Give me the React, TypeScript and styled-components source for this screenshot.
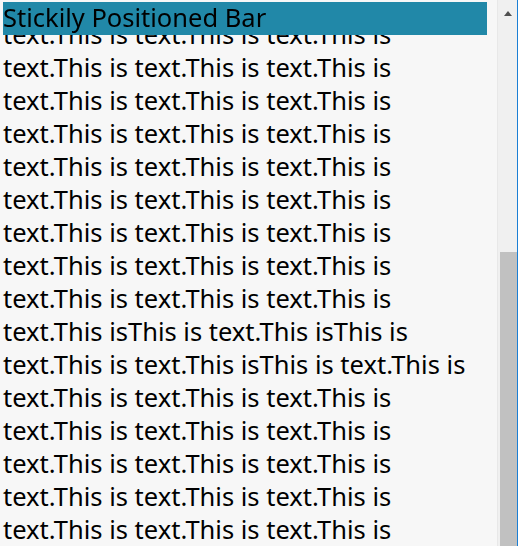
import { useLayoutEffect, useRef } from 'react';
import { styled, createGlobalStyle } from 'styled-components';

const GlobalStyle = createGlobalStyle`
  html, body {
    margin: 0;
    padding: 0;
    overflow: hidden;
    background: #f7f7f7;
  }
`;

const LINE = 'text.This is text.This is text.This is';

// lines already scrolled past, then what is on screen, then a tail below the fold
const hiddenLines = ['This is text.This is text.This is text.This is', ...Array(7).fill(LINE)];
const visibleLines = [
  ...Array(9).fill(LINE),
  'text.This isThis is text.This isThis is',
  'text.This is text.This isThis is text.This is',
  ...Array(5).fill(LINE),
];
const tailLines = [...Array(4).fill(LINE), 'text.This is text.'];
const allLines = [...hiddenLines, ...visibleLines, ...tailLines];

const LINE_HEIGHT = 33;

function App() {
  const scrollerRef = useRef<HTMLDivElement>(null);

  useLayoutEffect(() => {
    if (scrollerRef.current) {
      scrollerRef.current.scrollTop = 17 + LINE_HEIGHT * hiddenLines.length;
    }
  }, []);

  return (
    <>
      <GlobalStyle />
      <Frame>
        <Scroller ref={scrollerRef}>
          <StickyBar>Stickily Positioned Bar</StickyBar>
          <Paragraph>
            {allLines.map((l, i) => (
              <Line key={i}>{l}</Line>
            ))}
          </Paragraph>
        </Scroller>
        <ScrollTrack>
          <ArrowButton>
            <UpArrow />
          </ArrowButton>
          <ThumbSpace />
          <Thumb />
        </ScrollTrack>
      </Frame>
    </>
  );
}

export default App;

const Frame = styled.div`
  display: flex;
  width: 518px;
  height: 546px;
  box-sizing: border-box;
  border-right: 1px solid #1b7fd5;
  background: #f7f7f7;
`;

const Scroller = styled.div`
  flex: 1;
  height: 100%;
  overflow-y: scroll;
  scrollbar-width: none;
  border-top: 2px solid #f7f7f7;
  padding-left: 3px;
  box-sizing: border-box;
  font-family: 'Noto Sans', 'Open Sans', sans-serif;
  font-size: 25.5px;
  line-height: ${LINE_HEIGHT}px;
  color: #000;
  &::-webkit-scrollbar {
    display: none;
  }
`;

const StickyBar = styled.div`
  position: sticky;
  top: 0;
  width: 484px;
  height: ${LINE_HEIGHT}px;
  line-height: 31px;
  background: #2188a8;
  white-space: nowrap;
  z-index: 1;
`;

const Paragraph = styled.p`
  margin: 0;
`;

const Line = styled.span`
  display: block;
  white-space: nowrap;
`;

const ScrollTrack = styled.div`
  width: 20px;
  height: 100%;
  display: flex;
  flex-direction: column;
  align-items: center;
  background: #f0f0f0;
  border-left: 1px solid #e8e8e8;
  box-sizing: border-box;
`;

const ArrowButton = styled.div`
  height: 26px;
  width: 100%;
  display: flex;
  justify-content: center;
  padding-top: 11px;
  box-sizing: border-box;
`;

const UpArrow = styled.div`
  width: 0;
  height: 0;
  border-left: 4.5px solid transparent;
  border-right: 4.5px solid transparent;
  border-bottom: 5px solid #505050;
`;

const ThumbSpace = styled.div`
  height: 226px;
`;

const Thumb = styled.div`
  flex: 1;
  width: 17px;
  margin-left: 1px;
  background: #c1c1c1;
`;
